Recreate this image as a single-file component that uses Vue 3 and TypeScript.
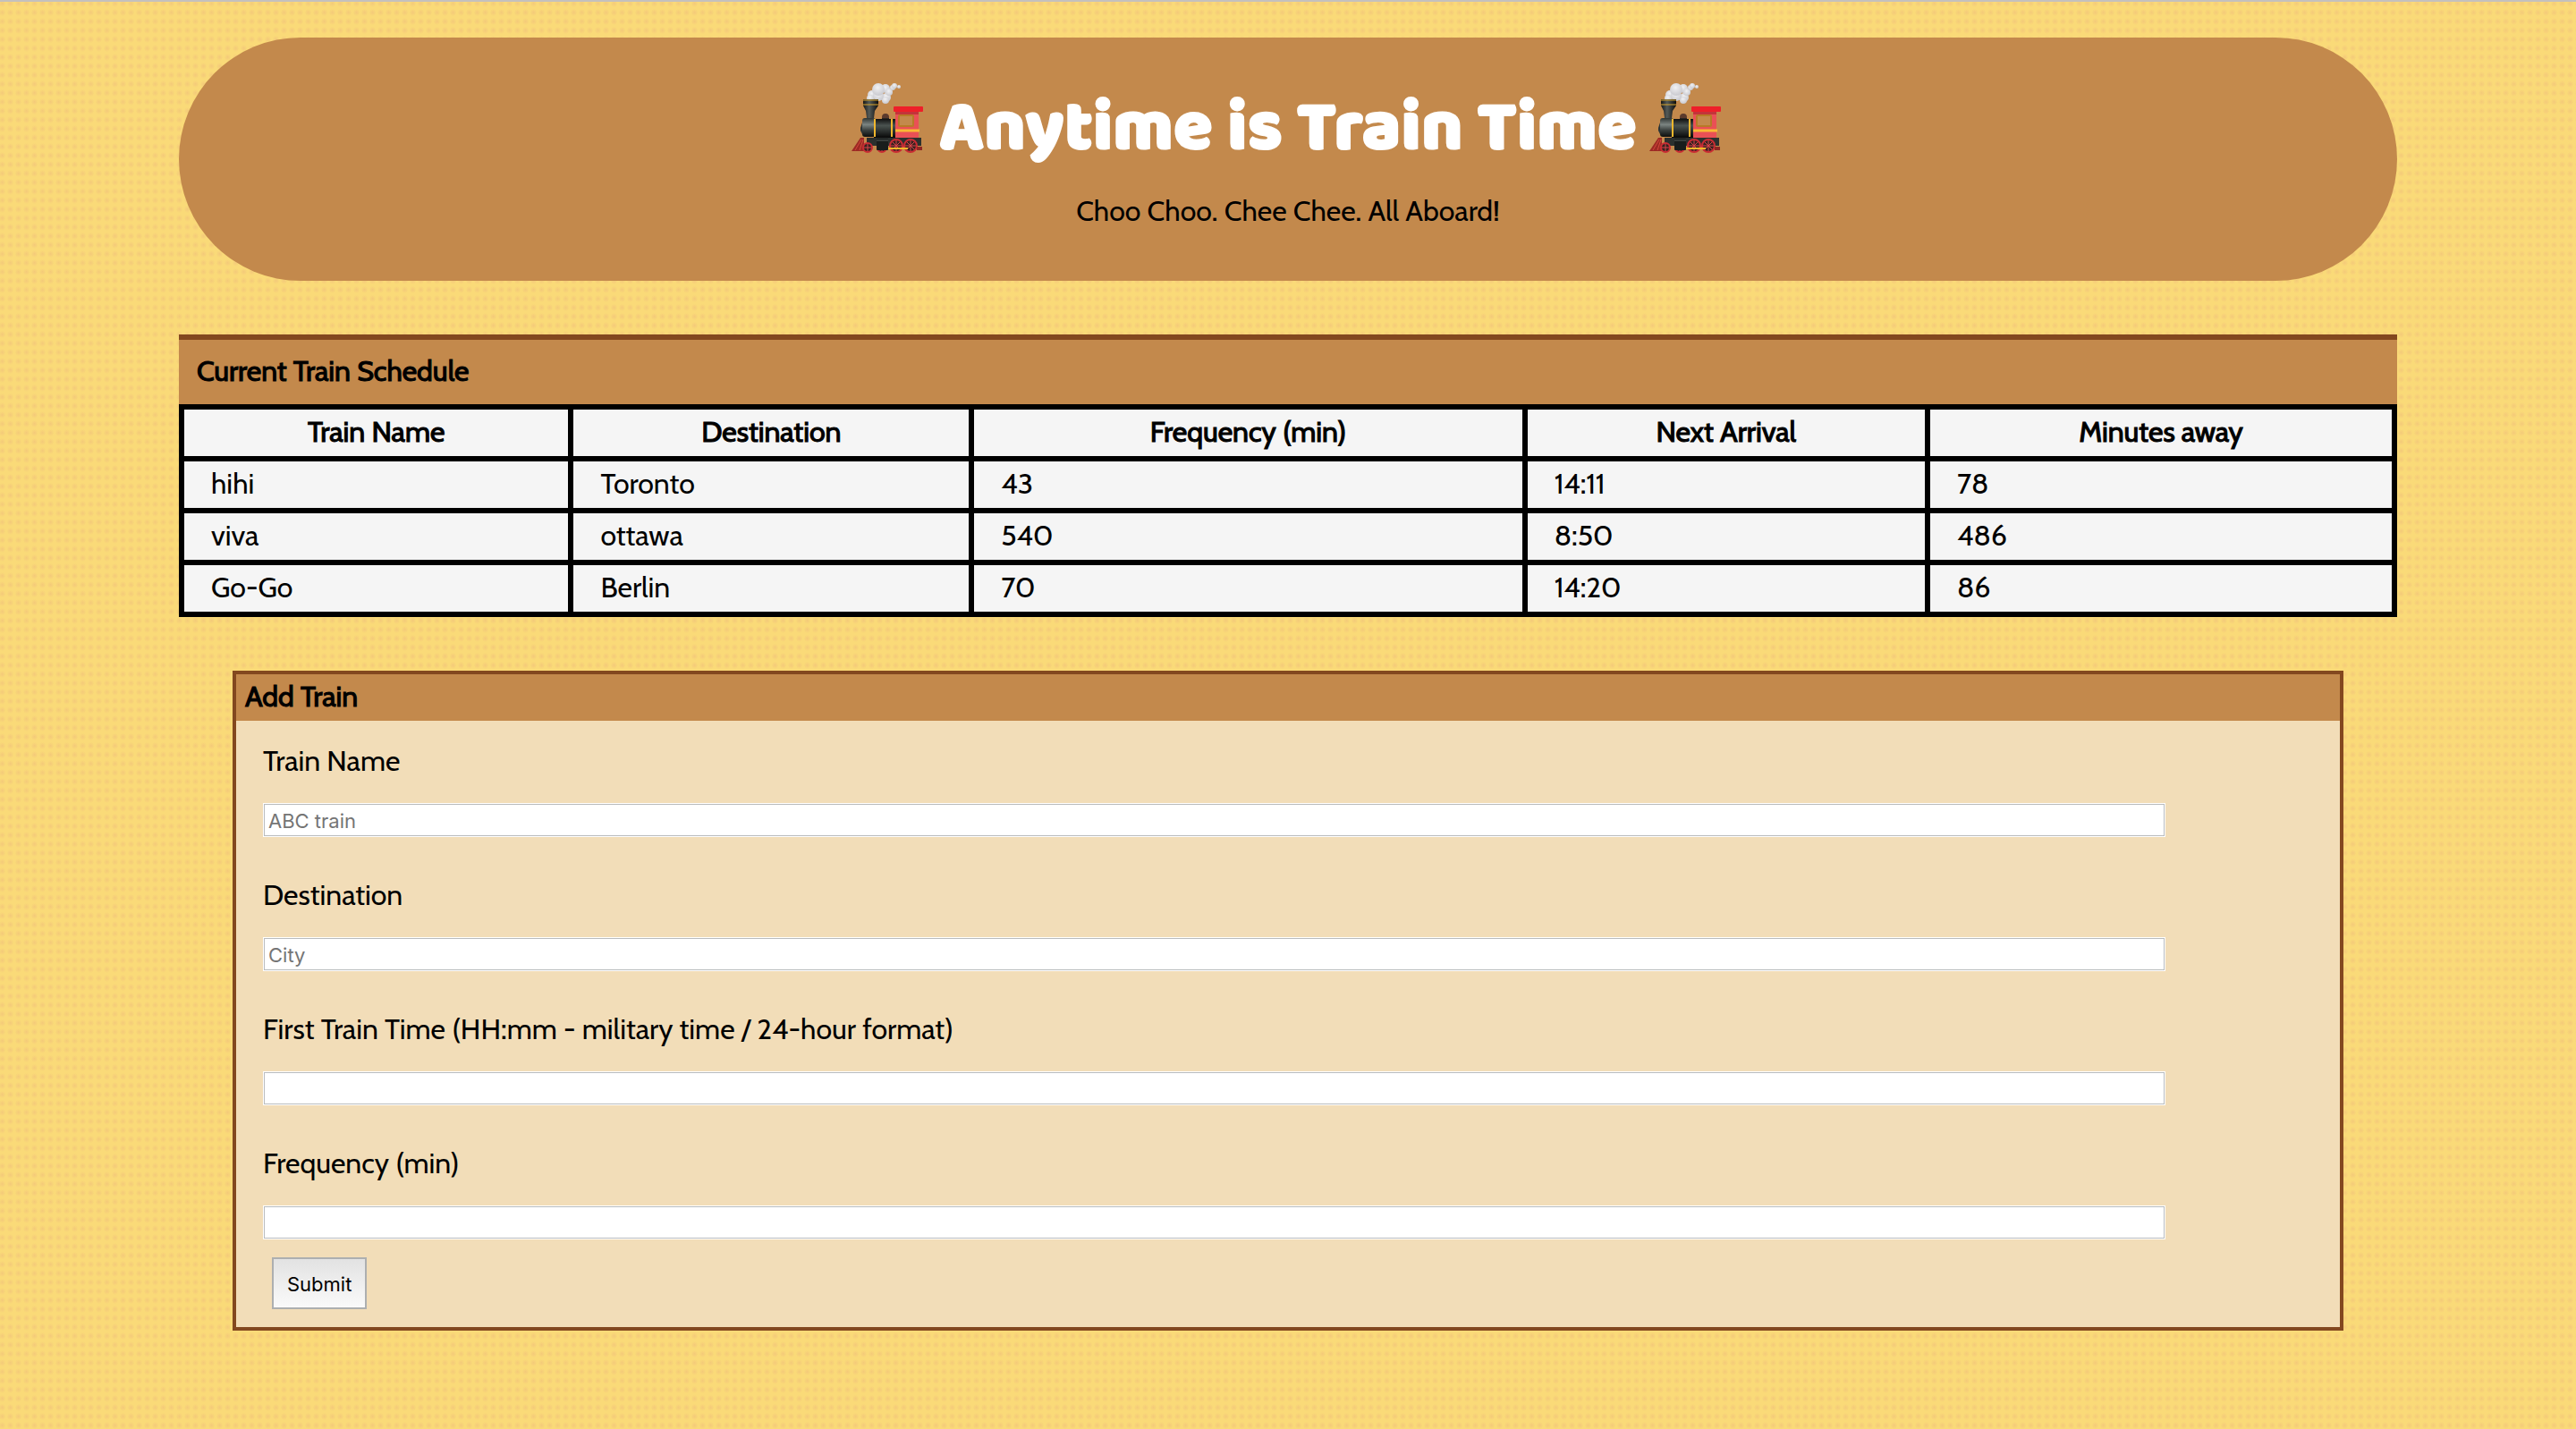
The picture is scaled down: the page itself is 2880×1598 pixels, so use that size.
<script setup lang="ts">
import { reactive } from 'vue'

interface Train {
  name: string
  destination: string
  frequency: number
  next: string
  away: number
}

interface Field {
  id: 'name' | 'destination' | 'first' | 'frequency'
  label: string
  placeholder: string
}

const columns: string[] = ['Train Name', 'Destination', 'Frequency (min)', 'Next Arrival', 'Minutes away']

const trains: Train[] = [
  { name: 'hihi', destination: 'Toronto', frequency: 43, next: '14:11', away: 78 },
  { name: 'viva', destination: 'ottawa', frequency: 540, next: '8:50', away: 486 },
  { name: 'Go-Go', destination: 'Berlin', frequency: 70, next: '14:20', away: 86 },
]

const fields: Field[] = [
  { id: 'name', label: 'Train Name', placeholder: 'ABC train' },
  { id: 'destination', label: 'Destination', placeholder: 'City' },
  { id: 'first', label: 'First Train Time (HH:mm - military time / 24-hour format)', placeholder: '' },
  { id: 'frequency', label: 'Frequency (min)', placeholder: '' },
]

const form = reactive({ name: '', destination: '', first: '', frequency: '' })
</script>

<template>
  <div class="page">
    <svg class="defs" aria-hidden="true">
      <defs>
        <linearGradient id="boiler" x1="0" y1="0" x2="0" y2="1">
          <stop offset="0" stop-color="#2f3533" />
          <stop offset="0.35" stop-color="#7c8582" />
          <stop offset="0.65" stop-color="#3a403e" />
          <stop offset="1" stop-color="#0d0f0e" />
        </linearGradient>
        <linearGradient id="barrel" x1="0" y1="0" x2="0" y2="1">
          <stop offset="0" stop-color="#111" />
          <stop offset="0.35" stop-color="#4b5350" />
          <stop offset="1" stop-color="#080808" />
        </linearGradient>
        <linearGradient id="stack" x1="0" y1="0" x2="1" y2="0">
          <stop offset="0" stop-color="#161616" />
          <stop offset="0.4" stop-color="#555b58" />
          <stop offset="1" stop-color="#0c0c0c" />
        </linearGradient>
        <radialGradient id="puff" cx="0.45" cy="0.35" r="0.7">
          <stop offset="0" stop-color="#f1f1f3" />
          <stop offset="1" stop-color="#c6c6cc" />
        </radialGradient>
        <symbol id="engine" viewBox="0 0 84 80">
          <g fill="url(#puff)">
            <circle cx="23" cy="14" r="5" />
            <circle cx="21" cy="18" r="4" />
            <circle cx="39" cy="17" r="5" />
            <circle cx="38" cy="20" r="4" />
            <circle cx="30" cy="15" r="6" />
            <circle cx="38" cy="7" r="5" />
            <circle cx="42" cy="11" r="4" />
            <circle cx="30" cy="8" r="7" />
            <circle cx="46" cy="6" r="3" />
            <circle cx="48" cy="4" r="3" />
            <circle cx="53" cy="5" r="2" />
          </g>
          <path d="M13 19h17v7l-4 6-1 8h-8l-1-8-3-6z" fill="url(#stack)" />
          <path d="M13 20h17M13 25h17" stroke="#d9a52c" stroke-width="1" />
          <circle cx="38" cy="39" r="4" fill="#5b3a2c" />
          <path d="M34 40h8v4h-8z" fill="#2b2622" />
          <rect x="12" y="40" width="15" height="21" rx="3" fill="url(#boiler)" />
          <path d="M12 45l-2 6v3l2 4z" fill="#2a3437" />
          <rect x="25" y="41" width="26" height="21" fill="url(#barrel)" />
          <path d="M26 41v20M45 41v20" stroke="#f0b72d" stroke-width="2" />
          <path d="M49 32h26v35H49z" fill="#ea5055" />
          <path d="M49 33h26v3H49z" fill="#c3343a" />
          <rect x="47" y="27" width="33" height="6" rx="1" fill="#ee1f29" />
          <rect x="53" y="37" width="16" height="12" rx="1" fill="#c3894c" stroke="#b87a26" stroke-width="2" />
          <path d="M49 54h27" stroke="#f8b834" stroke-width="3" />
          <path d="M17 62h61v9H17z" fill="#2b302e" />
          <path d="M10 62h4v15H0z" fill="#9d2a24" />
          <path d="M11 64L4 76M13 64l-4 12" stroke="#d3473b" stroke-width="1" />
          <g fill="#35221f" stroke="#c92c33" stroke-width="2">
            <circle cx="18" cy="73" r="5" />
            <circle cx="34" cy="73" r="5" />
            <circle cx="50" cy="71" r="7" />
            <circle cx="66" cy="71" r="7" />
          </g>
          <path d="M18 69v8M14 73h8M34 69v8M30 73h8M50 65v12M44 71h12M46 67l8 8M54 67l-8 8M66 65v12M60 71h12M62 67l8 8M70 67l-8 8" stroke="#d9434a" stroke-width="1" />
          <rect x="28" y="63" width="13" height="13" rx="1" fill="#191d1c" />
          <path d="M28 65h13" stroke="#59605d" stroke-width="1" />
          <path d="M41 74h22" stroke="#f4b52d" stroke-width="2" />
          <path d="M73 72h6v4h-6z" fill="#8e2723" />
        </symbol>
      </defs>
    </svg>

    <header class="banner">
      <h1>
        <svg class="engine" role="img" aria-label="Locomotive"><use href="#engine" /></svg>
        <span>Anytime is Train Time</span>
        <svg class="engine" role="img" aria-label="Locomotive"><use href="#engine" /></svg>
      </h1>
      <p>Choo Choo. Chee Chee. All Aboard!</p>
    </header>

    <main>
      <section class="schedule">
        <h2>Current Train Schedule</h2>
        <table>
          <colgroup>
            <col class="c-name" />
            <col class="c-dest" />
            <col class="c-freq" />
            <col class="c-next" />
            <col class="c-away" />
          </colgroup>
          <thead>
            <tr>
              <th v-for="c in columns" :key="c" scope="col">{{ c }}</th>
            </tr>
          </thead>
          <tbody>
            <tr v-for="t in trains" :key="t.name">
              <td>{{ t.name }}</td>
              <td>{{ t.destination }}</td>
              <td>{{ t.frequency }}</td>
              <td>{{ t.next }}</td>
              <td>{{ t.away }}</td>
            </tr>
          </tbody>
        </table>
      </section>

      <section class="add">
        <h2>Add Train</h2>
        <form @submit.prevent>
          <div v-for="f in fields" :key="f.id" class="field">
            <label :for="f.id">{{ f.label }}</label>
            <input :id="f.id" v-model="form[f.id]" type="text" :placeholder="f.placeholder" />
          </div>
          <button type="submit">Submit</button>
        </form>
      </section>
    </main>
  </div>
</template>

<style>
html,
body {
  min-height: 100%;
}

body {
  margin: 0;
  background-color: #fada78;
  background-image: radial-gradient(circle, #f4ca7a 0, #f4ca7a00 4px);
  background-size: 9px 10px;
  background-position: 7px 9px;
}
</style>

<style scoped>
.page {
  box-sizing: border-box;
  border-top: 2px solid #c4c1bd;
  padding: 40px 200px 110px;
  font-family: Cabin, Lato, sans-serif;
  font-size: 32px;
  line-height: 40px;
  color: #000;
}

.defs {
  position: absolute;
  width: 0;
  height: 0;
}

.banner {
  box-sizing: border-box;
  min-height: 272px;
  padding-top: 50px;
  border-radius: 136px;
  background: #c3894c;
  text-align: center;
}

.banner h1 {
  display: flex;
  justify-content: center;
  align-items: flex-start;
  gap: 14px;
  margin: 0;
  font-family: Baloo, "Baloo 2", "Baloo Bhai 2", "Baloo Bhai", Lato, sans-serif;
  font-size: 80px;
  font-weight: 900;
  line-height: 104px;
  color: #fff;
  -webkit-text-stroke: 2px #fff;
}

.engine {
  width: 84px;
  height: 80px;
  flex: none;
}

.banner p {
  margin: 20px 0 0;
}

.schedule {
  margin-top: 60px;
}

h2,
th {
  font-weight: 400;
  -webkit-text-stroke: 1px #000;
}

h2 {
  margin: 0;
  font-size: 32px;
  line-height: 40px;
}

.schedule h2 {
  padding: 15px 20px 17px;
  border-top: 6px solid #83481f;
  background: #c3894c;
}

table {
  width: 100%;
  table-layout: fixed;
  border-collapse: collapse;
  background: #f5f5f5;
}

.c-name {
  width: 17.6%;
}

.c-dest {
  width: 18.1%;
}

.c-freq {
  width: 25%;
}

.c-next {
  width: 18.2%;
}

.c-away {
  width: 21.1%;
}

th,
td {
  padding: 5px 30px 7px;
  border: 6px solid #000;
  line-height: 40px;
}

th {
  text-align: center;
}

td {
  text-align: left;
}

.add {
  margin: 60px 60px 0;
  border: 4px solid #83481f;
  background: #f2ddb8;
}

.add h2 {
  padding: 5px 10px 7px;
  background: #c3894c;
}

form {
  padding: 25px 30px 20px;
}

.field {
  display: flex;
  flex-direction: column;
  gap: 27px;
  margin-bottom: 45px;
}

.field input {
  box-sizing: border-box;
  width: 92.8%;
  height: 38px;
  padding: 2px 5px 0;
  border: 1px solid #fff;
  border-radius: 0;
  outline: 1px solid #b9bcbe;
  outline-offset: -2px;
  background: #fff;
  font-family: Inter, sans-serif;
  font-size: 22px;
}

.field input::placeholder {
  color: #757575;
}

.field:last-of-type {
  margin-bottom: 20px;
}

button {
  display: block;
  height: 58px;
  margin-left: 10px;
  padding: 2px 15px 0;
  border: 2px solid #adafb0;
  border-radius: 0;
  background: linear-gradient(#e2e2e2, #fafafa);
  font-family: Inter, sans-serif;
  font-size: 22px;
  color: #000;
}
</style>
